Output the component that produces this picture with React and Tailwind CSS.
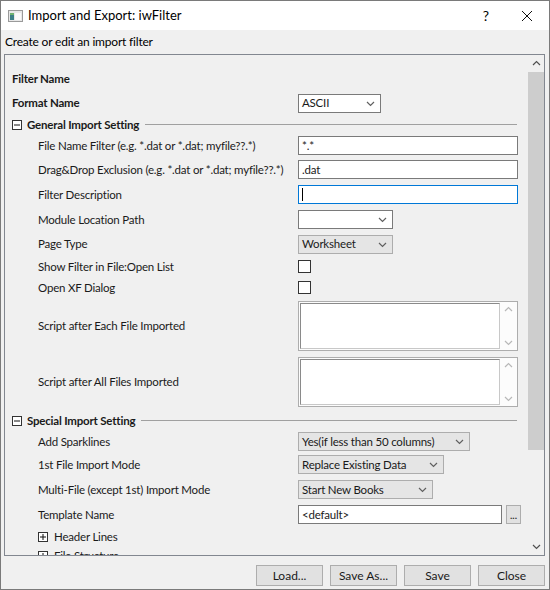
const font = { fontFamily: 'Lato, "Liberation Sans", Arial, sans-serif' };

function MinusBox({ plus }) {
  return (
    <svg width="10" height="10" viewBox="0 0 10 10" className="shrink-0">
      <rect x="0.5" y="0.5" width="9" height="9" fill="#fff" stroke="#333" />
      <line x1="2" y1="5" x2="8" y2="5" stroke="#111" />
      {plus && <line x1="5" y1="2" x2="5" y2="8" stroke="#111" />}
    </svg>
  );
}

function Chevron({ up, color = "#606060", size = 9 }) {
  return (
    <svg width={size} height={size} viewBox="0 0 9 9">
      <polyline
        points={up ? "1,6 4.5,2.5 8,6" : "1,3 4.5,6.5 8,3"}
        fill="none"
        stroke={color}
        strokeWidth="1.2"
      />
    </svg>
  );
}

function Select({ value, width, gray }) {
  return (
    <div
      className={
        "h-[19px] flex items-center justify-between pl-[3px] pr-[5px] border " +
        (gray ? "bg-[#e5e5e5] border-[#adadad]" : "bg-white border-[#7a7a7a]")
      }
      style={{ width }}
    >
      <span className="whitespace-nowrap">{value}</span>
      <Chevron color="#606060" />
    </div>
  );
}

function Input({ value, width = 220, focused }) {
  return (
    <div
      className={
        "h-[19px] flex items-center px-[3px] bg-white border " +
        (focused ? "border-[#0078d7]" : "border-[#7a7a7a]")
      }
      style={{ width }}
    >
      {focused ? <span className="w-px h-[13px] bg-black" /> : <span>{value}</span>}
    </div>
  );
}

function TextArea() {
  return (
    <div className="w-[220px] h-[50px] border border-[#adadad] bg-[#fcfcfc] flex">
      <div className="flex-1 m-[1px] mr-0 bg-white border-t border-l border-[#8a8a8a] border-b border-r border-b-[#c8c8c8] border-r-[#c8c8c8]" />
      <div className="w-[17px] flex flex-col items-center justify-between py-[3px]">
        <Chevron up color="#b8b8b8" />
        <Chevron color="#b8b8b8" />
      </div>
    </div>
  );
}

function Checkbox() {
  return <div className="w-[13px] h-[13px] bg-white border border-[#333]" />;
}

function Row({ h, label, bold, indent = true, children }) {
  return (
    <div className="flex items-center shrink-0" style={{ height: h }}>
      <div className={"w-[293px] shrink-0 whitespace-nowrap " + (indent ? "pl-[33px]" : "pl-[7px]") + (bold ? " font-bold" : "")}>
        {label}
      </div>
      {children}
    </div>
  );
}

function Section({ h, label }) {
  return (
    <div className="flex items-center shrink-0 pl-[7px] pr-[11px]" style={{ height: h }}>
      <MinusBox />
      <span className="font-bold ml-[5px] mr-[6px] whitespace-nowrap">{label}</span>
      <div className="flex-1 h-px bg-[#a0a0a0]" />
    </div>
  );
}

function Button({ children }) {
  return (
    <div className="w-[67px] h-[21px] bg-[#e1e1e1] border border-[#adadad] flex items-center justify-center">
      {children}
    </div>
  );
}

export default function App() {
  return (
    <div
      className="w-[550px] h-[590px] border border-[#7a7a7a] bg-[#f0f0f0] flex flex-col text-[11.5px] tracking-[-0.2px] text-[#1a1a1a] overflow-hidden"
      style={font}
    >
      {/* Title bar */}
      <div className="h-[29px] bg-white flex items-center shrink-0 tracking-normal">
        <svg width="15" height="12" viewBox="0 0 15 12" className="ml-[7px]">
          <rect x="0.5" y="0.5" width="14" height="11" fill="#e8e8e8" stroke="#9a9a9a" />
          <rect x="2" y="3" width="4" height="7" fill="#3c7f86" />
          <rect x="2" y="3" width="4" height="2" fill="#6fb26f" />
          <rect x="7" y="3" width="6" height="7" fill="#fafafa" />
        </svg>
        <span className="ml-[5px] text-[13px] text-black">Import and Export: iwFilter</span>
        <div className="flex-1" />
        <span className="text-[14px] text-black mr-[32px]">?</span>
        <svg width="12" height="12" viewBox="0 0 12 12" className="mr-[16px]">
          <path d="M1 1 L11 11 M11 1 L1 11" stroke="#111" strokeWidth="1" />
        </svg>
      </div>

      {/* Subtitle */}
      <div className="h-[24px] flex items-center pl-[4px] shrink-0 text-black text-[12px]">Create or edit an import filter</div>

      {/* Panel */}
      <div className="ml-[3px] mr-[4px] h-[502px] border border-[#828790] flex shrink-0 overflow-hidden">
        <div className="flex-1 flex flex-col overflow-hidden pt-[11px]">
          <Row h={25} label="Filter Name" bold indent={false} />
          <Row h={24} label="Format Name" bold indent={false}>
            <Select value="ASCII" width={83} />
          </Row>
          <Section h={19} label="General Import Setting" />
          <Row h={23} label="File Name Filter (e.g. *.dat or *.dat; myfile??.*)">
            <Input value="*.*" />
          </Row>
          <Row h={25} label="Drag&Drop Exclusion (e.g. *.dat or *.dat; myfile??.*)">
            <Input value=".dat" />
          </Row>
          <Row h={25} label="Filter Description">
            <Input focused />
          </Row>
          <Row h={25} label="Module Location Path">
            <Select value="" width={95} />
          </Row>
          <Row h={24} label="Page Type">
            <Select value="Worksheet" width={95} gray />
          </Row>
          <Row h={21} label="Show Filter in File:Open List">
            <Checkbox />
          </Row>
          <Row h={21} label="Open XF Dialog">
            <Checkbox />
          </Row>
          <Row h={56} label="Script after Each File Imported">
            <TextArea />
          </Row>
          <Row h={56} label="Script after All Files Imported">
            <TextArea />
          </Row>
          <Section h={21} label="Special Import Setting" />
          <Row h={21} label="Add Sparklines">
            <Select value="Yes(if less than 50 columns)" width={172} gray />
          </Row>
          <Row h={25} label="1st File Import Mode">
            <Select value="Replace Existing Data" width={146} gray />
          </Row>
          <Row h={25} label="Multi-File (except 1st) Import Mode">
            <Select value="Start New Books" width={135} gray />
          </Row>
          <Row h={25} label="Template Name">
            <Input value="<default>" width={204} />
            <div className="ml-[4px] w-[15px] h-[19px] bg-[#e1e1e1] border border-[#adadad] flex items-end justify-center pb-[3px]">
              <span className="text-[10px] leading-none font-bold text-[#333] tracking-normal">...</span>
            </div>
          </Row>
          <div className="flex items-center shrink-0 h-[20px] pl-[33px]">
            <MinusBox plus />
            <span className="ml-[6px]">Header Lines</span>
          </div>
          <div className="flex items-center shrink-0 h-[17px] pl-[33px]">
            <MinusBox plus />
            <span className="ml-[6px]">File Structure</span>
          </div>
        </div>

        {/* Scrollbar */}
        <div className="w-[16px] bg-[#f0f0f0] flex flex-col items-center shrink-0">
          <div className="h-[17px] flex items-center justify-center">
            <Chevron up color="#505050" />
          </div>
          <div className="w-full h-[378px] bg-[#cdcdcd]" />
          <div className="flex-1" />
          <div className="h-[17px] flex items-center justify-center">
            <Chevron color="#505050" />
          </div>
        </div>
      </div>

      {/* Buttons */}
      <div className="flex justify-end gap-[7px] mt-[9px] pr-[4px] text-[12px] tracking-normal">
        <Button>Load...</Button>
        <Button>Save As...</Button>
        <Button>Save</Button>
        <Button>Close</Button>
      </div>
    </div>
  );
}
